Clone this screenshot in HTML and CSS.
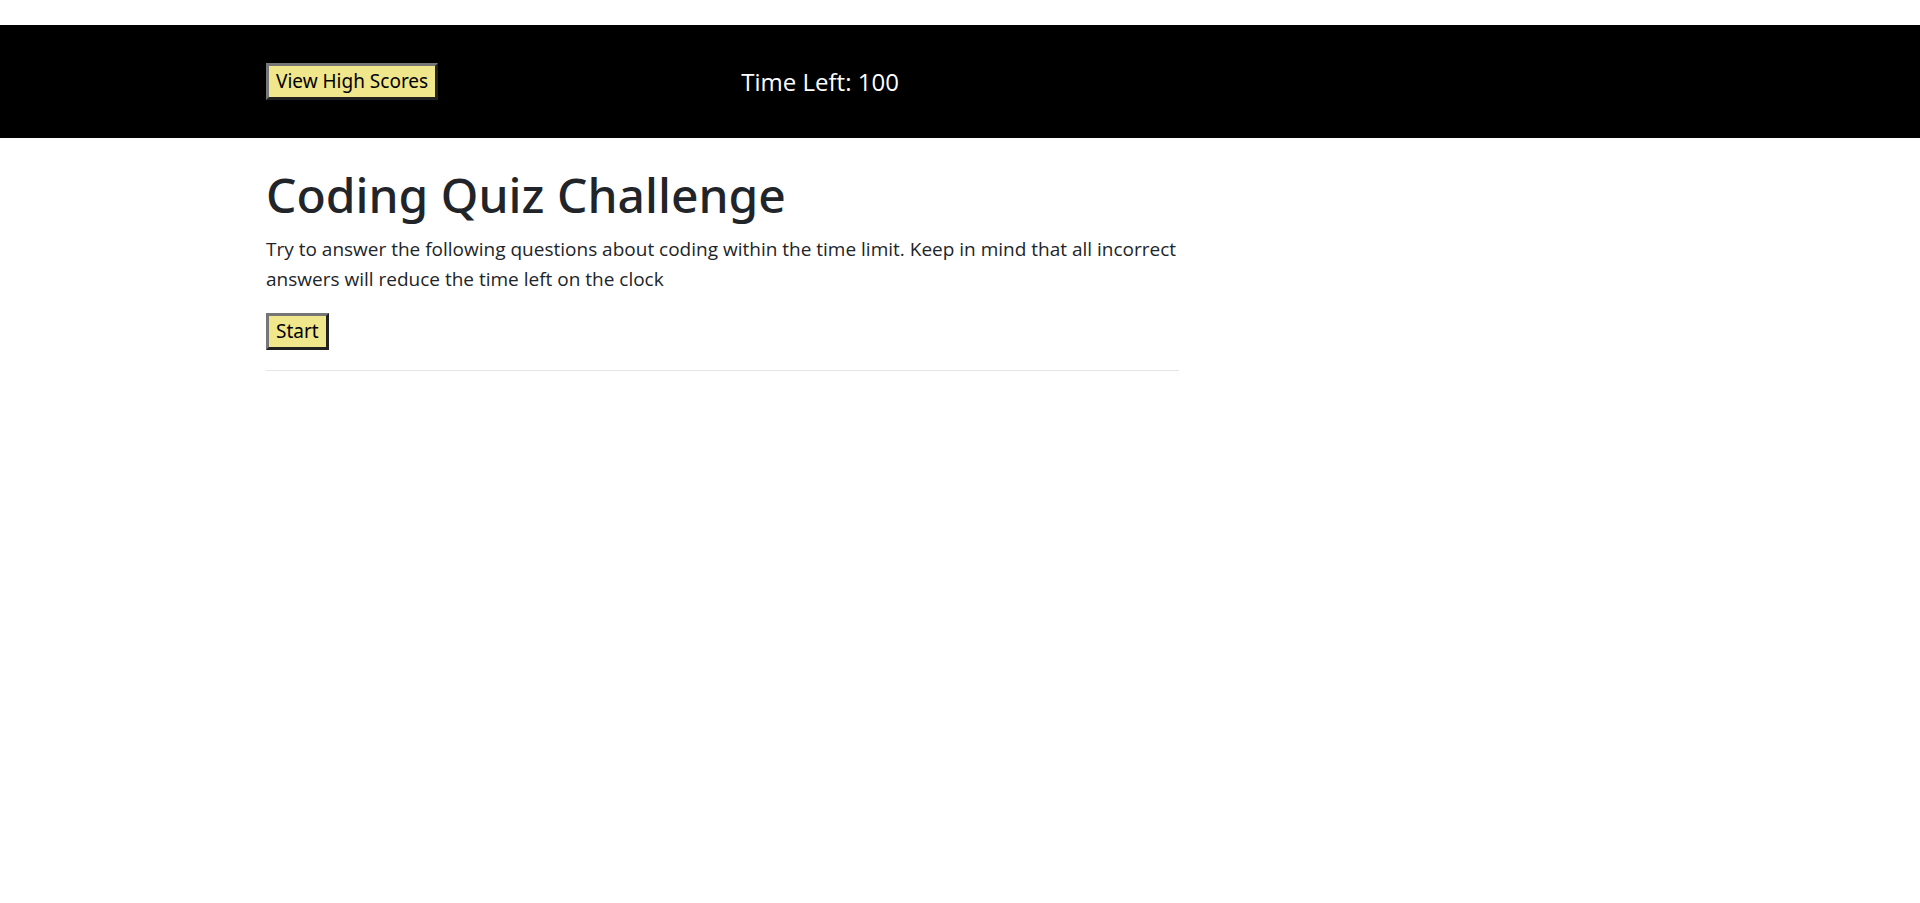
FILE: index.html
```html
<!DOCTYPE html>
<html lang="en">
<head>
<meta charset="utf-8">
<title>Coding Quiz Challenge</title>
<link rel="stylesheet" href="styles.css">
</head>
<body>
<header class="topbar">
  <div class="container row">
    <div class="col"><button type="button" class="quiz-button">View High Scores</button></div>
    <div class="col timer">Time Left: 100</div>
  </div>
</header>
<main class="container">
  <section class="intro">
    <h1 class="title">Coding Quiz Challenge</h1>
    <p class="lead">Try to answer the following questions about coding within the time limit. Keep in mind that all incorrect answers will reduce the time left on the clock</p>
    <button type="button" class="quiz-button">Start</button>
    <hr class="divider">
  </section>
</main>
</body>
</html>
```
FILE: styles.css
```css
* { box-sizing: border-box; }
body {
  margin: 0;
  font-family: "Segoe UI", "Open Sans", "Noto Sans", sans-serif;
  font-size: 19px;
  line-height: 30px;
  color: #212529;
  background: #fff;
}
.container {
  max-width: 1426px;
  margin: 0 auto;
}
.topbar {
  margin-top: 25px;
  padding: 38px 0;
  background: #000;
  color: #fff;
}
.row { display: flex; }
.col {
  flex: 0 0 calc(100% / 3);
  padding: 0 19px;
}
.timer { font-size: 24px; line-height: 37px; }
.quiz-button {
  display: block;
  padding: 1px 7px;
  border: 3px solid;
  border-color: #767676 #212121 #212121 #767676;
  background: #f0e68c;
  color: #000;
  font-family: "Segoe UI", "Noto Sans", sans-serif;
  font-size: 19px;
  line-height: 29px;
}
.intro {
  width: calc(200% / 3);
  padding: 28px 19px 0;
}
.title {
  margin: 0 0 10px;
  font-family: "Segoe UI", "Noto Sans", sans-serif;
  font-size: 48px;
  line-height: 58px;
  font-weight: 500;
}
.lead { margin: 0 0 19px; }
.divider {
  margin: 20px 0;
  border: 0;
  border-top: 1px solid #e5e5e5;
}
```
